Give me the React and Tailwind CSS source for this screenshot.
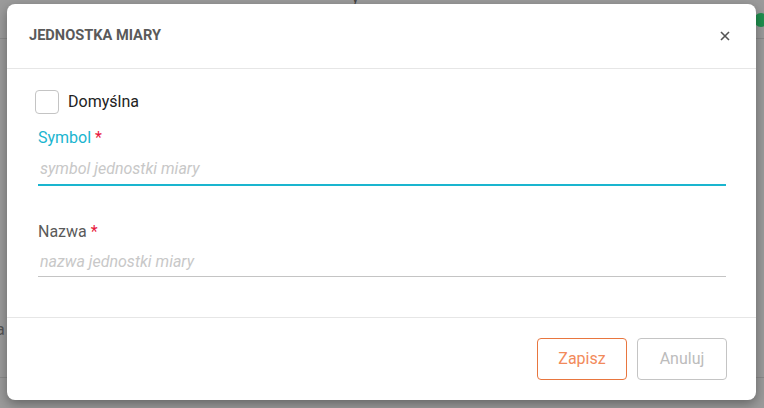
import React, { useState } from 'react';

function App() {
  const [isDefault, setIsDefault] = useState(false);
  const [symbol, setSymbol] = useState('');
  const [name, setName] = useState('');

  return (
    <div className="relative w-[764px] h-[408px] overflow-hidden bg-[#9b9b9b]" style={{ fontFamily: 'Roboto, "Liberation Sans", sans-serif' }}>
      {/* page behind the overlay */}
      <div className="absolute left-0 top-[38px] w-full border-t border-[#8a8a8a]" />
      <div className="absolute left-0 top-[377px] w-full border-t border-[#8a8a8a]" />
      <div className="absolute left-[-4px] top-[318px] text-[16px] text-[#555]">a</div>
      <div className="absolute left-[754px] top-[13px] w-[14px] h-[14px] rounded-full bg-[#1f8f4e]" />
      <div className="absolute left-[352px] top-[-12px] text-[14px] text-[#444]">y</div>

      <div className="absolute left-[7px] top-[4px] w-[749px] h-[396px] bg-white rounded-[8px] shadow-[0_4px_12px_rgba(0,0,0,0.35)] flex flex-col">
        <div className="h-[65px] flex items-center justify-between pl-[22px] pr-[26px] border-b border-[#e6e6e6] shrink-0">
          <h2 className="text-[14.6px] font-bold text-[#5a5a5a]">JEDNOSTKA MIARY</h2>
          <button className="text-[#555]">
            <svg width="10" height="10" viewBox="0 0 10 10">
              <path d="M1 1L9 9M9 1L1 9" stroke="currentColor" strokeWidth="1.6" />
            </svg>
          </button>
        </div>

        <div className="flex-1 pl-[28px] pr-[30px] pt-[21px]">
          <label className="flex items-center gap-[9px] cursor-pointer">
            <input type="checkbox" className="hidden" checked={isDefault} onChange={() => setIsDefault(!isDefault)} />
            <span className="w-[24px] h-[24px] rounded-[4px] border border-[#c4c4c4] bg-white" />
            <span className="text-[16px] text-[#222]">Domyślna</span>
          </label>

          <div className="mt-[14px] pl-[3px]">
            <div className="text-[16px] text-[#1ab5cf] leading-[20px]">
              Symbol <span className="text-[#e8193c]">*</span>
            </div>
            <input
              value={symbol}
              onChange={e => setSymbol(e.target.value)}
              placeholder="symbol jednostki miary"
              className="w-full mt-[6px] h-[32px] pl-[2px] pb-[2px] text-[16px] italic placeholder:text-[#c8c8c8] outline-none border-b-2 border-[#1ab5cf]"
            />
          </div>

          <div className="mt-[36px] pl-[3px]">
            <div className="text-[16px] text-[#5a5a5a] leading-[20px]">
              Nazwa <span className="text-[#e8193c]">*</span>
            </div>
            <input
              value={name}
              onChange={e => setName(e.target.value)}
              placeholder="nazwa jednostki miary"
              className="w-full mt-[6px] h-[29px] pl-[2px] pb-[2px] text-[16px] italic placeholder:text-[#c8c8c8] outline-none border-b border-[#c4c4c4]"
            />
          </div>
        </div>

        <div className="h-[83px] border-t border-[#e6e6e6] flex items-start justify-end gap-[10px] pr-[29px] pt-[20px] shrink-0">
          <button className="w-[90px] h-[42px] rounded-[4px] border border-[#e8763f] text-[#f28a5b] text-[16px]">Zapisz</button>
          <button className="w-[90px] h-[42px] rounded-[4px] border border-[#c4c4c4] text-[#bcbcbc] text-[16px]">Anuluj</button>
        </div>
      </div>
    </div>
  );
}

export default App;
